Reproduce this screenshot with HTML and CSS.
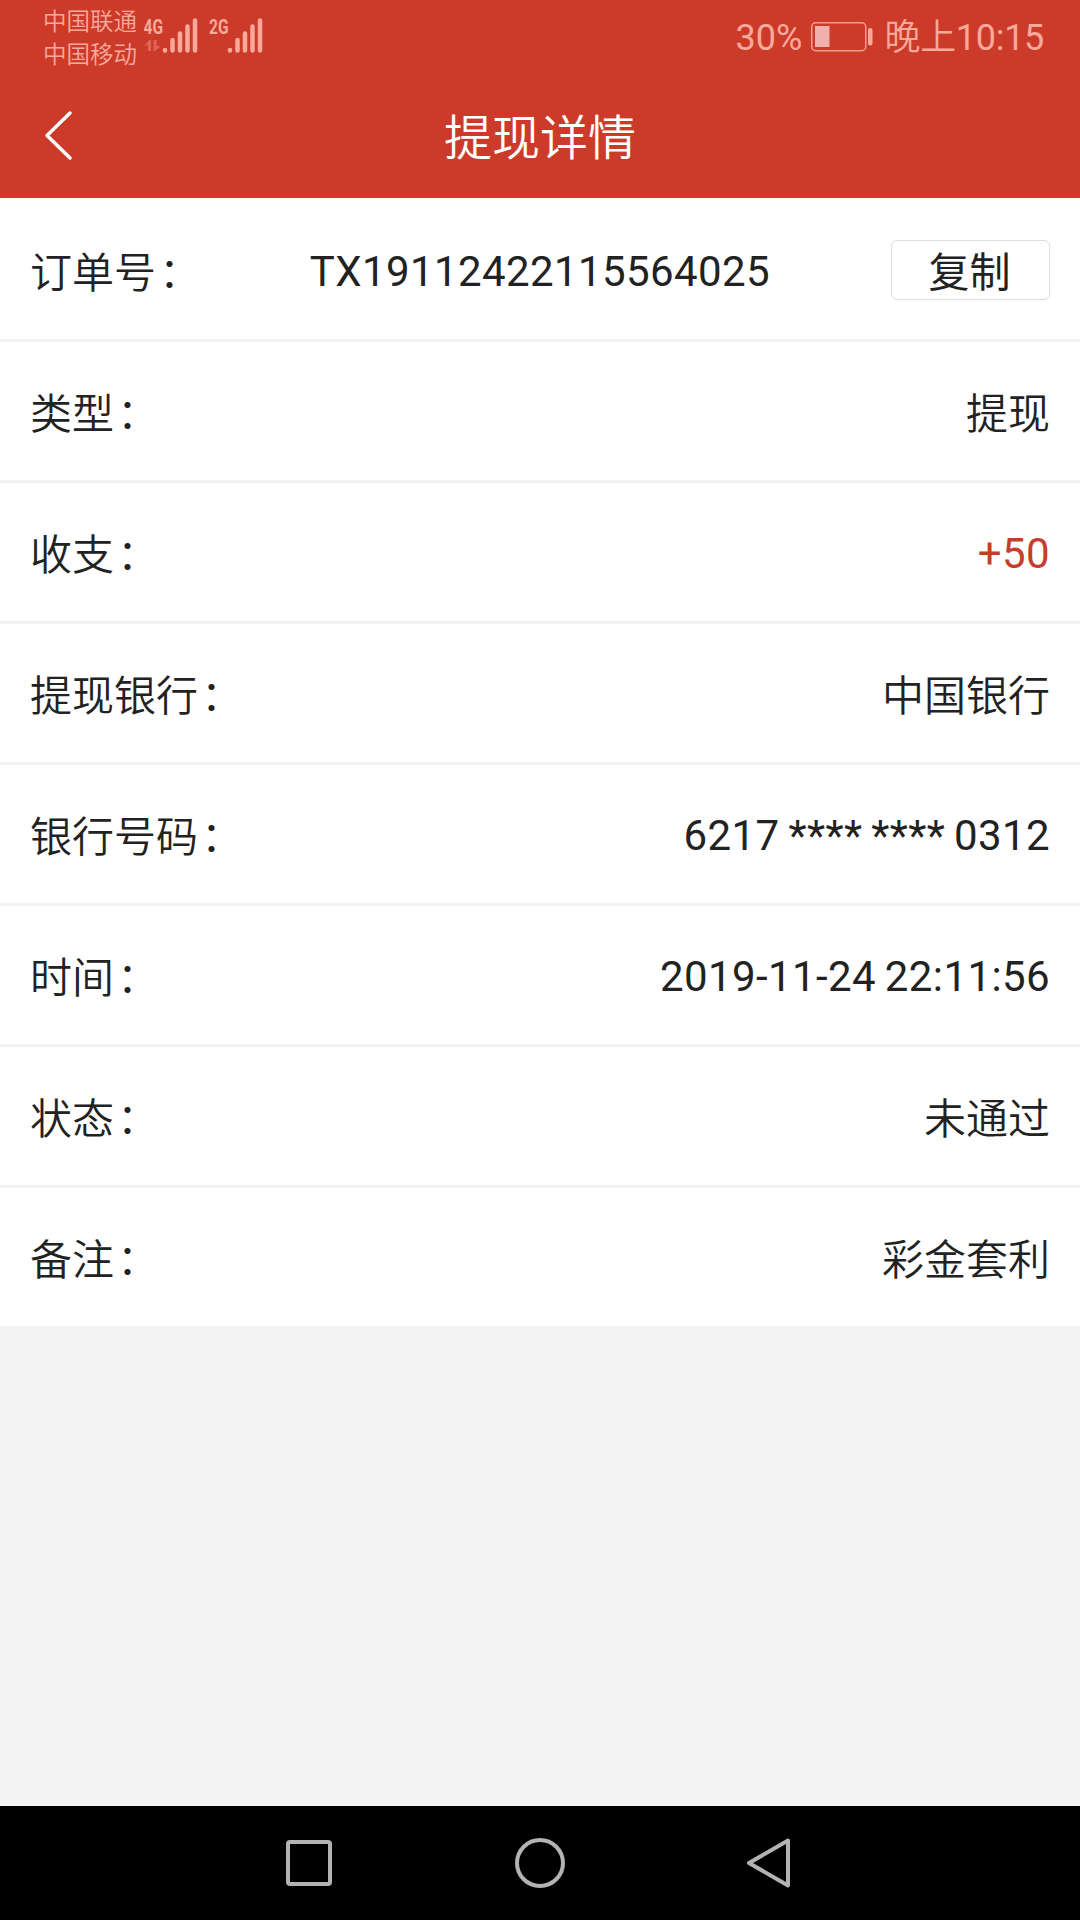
FILE: index.html
```
<!DOCTYPE html>
<html lang="zh-CN">
<head>
  <meta charset="UTF-8">
  <meta name="viewport" content="width=device-width, initial-scale=1.0">
  <title>提现详情</title>
  <link rel="stylesheet" href="styles.css">
</head>
<body>
  <div class="screen">
    <!-- Status bar -->
    <div class="status">
      <div class="status__carriers">
        <p>中国联通</p>
        <p>中国移动</p>
      </div>
      <svg class="status__signal" width="124" height="48" viewBox="0 -12 124 48">
        <text transform="translate(-.5 17) scale(.74 1)">4G</text>
        <path class="status__arrows" d="M0 29l5.500-6h1.500v11h-3v-6zM9.500 23h3v6h4l-5.500 5h-1.500z" />
        <path class="status__bars" d="M21 33v.5M28.500 23v10.500M36 16.500v17M43.500 9.500v24M51 3.500v30" />
        <text transform="translate(65 17) scale(.74 1)">2G</text>
        <path class="status__bars" d="M86 33v.5M93.500 23v10.500M101 16.500v17M108.500 9.500v24M116 3.500v30" />
      </svg>
      <div class="status__right">
        <span>30%</span>
        <svg class="status__battery" width="62" height="30" viewBox="0 0 62 30">
          <rect x=".75" y=".75" width="54" height="28" rx="4" fill="none" stroke="#f59e90" stroke-width="1.500" />
          <rect x="4" y="4" width="14.500" height="21" fill="#f0b0ab" />
          <rect x="57" y="6" width="4.500" height="17.500" rx="2" fill="#f8a99b" />
        </svg>
        <span class="status__time"><span class="status__period">晚上</span>10:15</span>
      </div>
    </div>

    <!-- Header -->
    <div class="header">
      <svg class="header__back" width="30" height="52" viewBox="0 0 30 52">
        <path d="M26 4L3 26.500L26 49" />
      </svg>
      <h1 class="header__title">提现详情</h1>
    </div>

    <!-- Details -->
    <ul class="list">
      <li class="row row--order">
        <span class="row__label">订单号<i>：</i></span>
        <span class="row__value">TX19112422115564025</span>
        <button class="row__copy">复制</button>
      </li>
      <li class="row">
        <span class="row__label">类型<i>：</i></span>
        <span class="row__value row__value--cn">提现</span>
      </li>
      <li class="row">
        <span class="row__label">收支<i>：</i></span>
        <span class="row__value row__value--red">+50</span>
      </li>
      <li class="row">
        <span class="row__label">提现银行<i>：</i></span>
        <span class="row__value row__value--cn">中国银行</span>
      </li>
      <li class="row">
        <span class="row__label">银行号码<i>：</i></span>
        <span class="row__value">6217 **** **** 0312</span>
      </li>
      <li class="row">
        <span class="row__label">时间<i>：</i></span>
        <span class="row__value">2019-11-24 22:11:56</span>
      </li>
      <li class="row">
        <span class="row__label">状态<i>：</i></span>
        <span class="row__value row__value--cn">未通过</span>
      </li>
      <li class="row">
        <span class="row__label">备注<i>：</i></span>
        <span class="row__value row__value--cn">彩金套利</span>
      </li>
    </ul>

    <!-- Navigation keys -->
    <div class="nav">
      <svg width="52" height="52" viewBox="0 0 52 52">
        <rect x="5" y="5" width="42" height="42" rx="2" />
      </svg>
      <svg width="52" height="52" viewBox="0 0 52 52">
        <circle cx="26" cy="26" r="23" />
      </svg>
      <svg width="52" height="52" viewBox="0 0 52 52">
        <path d="M43 3.500v45L4 26z" />
      </svg>
    </div>
  </div>
</body>
</html>
```

FILE: styles.css
```
* {
  margin: 0;
  padding: 0;
  box-sizing: border-box;
}

body {
  font-family: Roboto, "Noto Sans CJK SC", sans-serif;
  color: #222;
  background-color: #f3f3f3;
}

.screen {
  display: flex;
  flex-direction: column;
  height: 1920px;
}

/* Status bar */
.status {
  display: flex;
  height: 75px;
  padding: 5px 36px 0 43px;
  color: #f8a99b;
  background-color: #cc3b2a;
}

.status__carriers {
  width: 101px;
  padding-top: 1px;
  font-size: 23.5px;
  font-weight: 350;
  line-height: 33px;
}

.status__signal {
  fill: #f8a99b;
  font-size: 21px;
  font-weight: 700;
}

.status__bars {
  fill: none;
  stroke: #f8a99b;
  stroke-width: 4.5;
  stroke-linecap: round;
}

.status__arrows {
  fill: #dd6656;
}

.status__right {
  display: flex;
  align-items: center;
  height: 64px;
  margin-left: auto;
  font-size: 36px;
  line-height: 40px;
}

.status__right > span {
  padding-top: 2px;
}

.status__time {
  letter-spacing: -0.3px;
}

.status__period {
  font-weight: 350;
}

.status__battery {
  margin: 0 11px 0 9px;
}

/* Header */
.header {
  display: flex;
  align-items: center;
  position: relative;
  height: 123px;
  background-color: #cc3b2a;
}

.header__back {
  position: absolute;
  top: 34px;
  left: 44px;
  fill: none;
  stroke: #fff;
  stroke-width: 3.5;
  stroke-linecap: round;
  stroke-linejoin: round;
}

.header__title {
  width: 100%;
  padding-top: 5px;
  color: #fff;
  font-size: 48px;
  font-weight: 350;
  line-height: 56px;
  text-align: center;
}

/* Details */
.list {
  list-style: none;
  background-color: #fff;
}

.row {
  display: flex;
  align-items: center;
  justify-content: space-between;
  height: 141px;
  padding: 2px 30px 0;
  border-bottom: 3px solid #f3f3f3;
  font-size: 42px;
  line-height: 48px;
}

.row:last-child {
  height: 138px;
  border-bottom: none;
}

.row--order {
  display: grid;
  grid-template-columns: 1fr auto 1fr;
  height: 144px;
}

.row__label {
  padding-top: 6px;
  font-weight: 350;
}

.row--order .row__label {
  padding-top: 8px;
}

.row__label i {
  margin-left: 3px;
  font-style: normal;
}

.row__value {
  padding-top: 2px;
  letter-spacing: 0.4px;
  word-spacing: -2px;
}

.row--order .row__value {
  padding-top: 4px;
}

.row__value--cn {
  padding-top: 6px;
  font-weight: 350;
  letter-spacing: 0;
}

.row__value--red {
  color: #c63d2c;
}

.row__copy {
  justify-self: end;
  width: 159px;
  height: 60px;
  padding: 7px 2px 0 0;
  color: #222;
  background-color: #fff;
  border: 1px solid #ddd;
  border-radius: 6px;
  font-family: inherit;
  font-size: 41px;
  line-height: 51px;
}

/* Navigation keys */
.nav {
  display: flex;
  align-items: center;
  justify-content: center;
  gap: 179px;
  height: 114px;
  margin-top: auto;
  background-color: #000;
}

.nav svg {
  fill: none;
  stroke: #b3b3b3;
  stroke-width: 4;
  stroke-linejoin: round;
}
```
